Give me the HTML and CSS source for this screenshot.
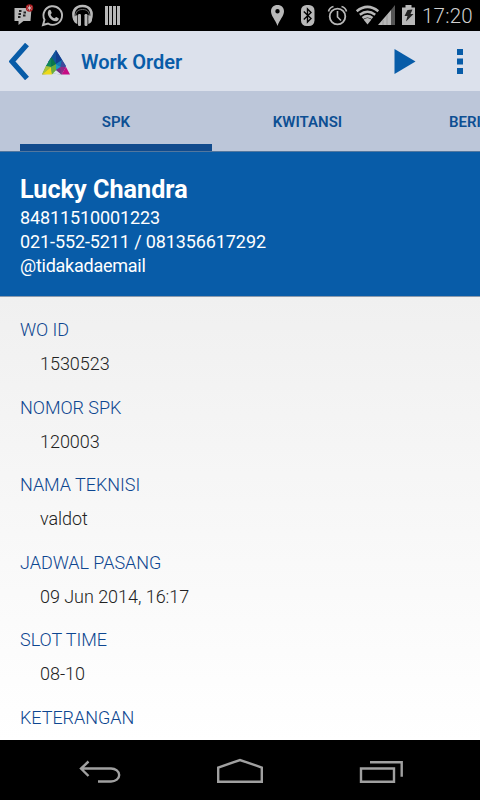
FILE: index.html
```html
<!DOCTYPE html>
<html lang="id">
<head>
    <meta charset="UTF-8">
    <meta name="viewport" content="width=device-width, initial-scale=1.0">
    <title>Work Order</title>
    <link rel="stylesheet" href="styles.css">
</head>
<body>

    <div class="status-bar">
        <svg width="130" height="31" viewBox="0 0 130 31" fill="#b8b8b8">
            <!-- messenger -->
            <path d="M14.500 8h17l-1 13h-7l-5 4v-4h-4z"/>
            <path d="M19 11h2.500M18.500 14h2.500M18 17h2.500M23.500 12.500h2.500M23 15.500h2.500" stroke="#222" stroke-width="1.800"/>
            <circle cx="29.500" cy="8" r="3.700" fill="#a61d20"/>
            <path d="M29.500 5.500v5M27.300 6.700l4.400 2.600M31.700 6.700l-4.400 2.600" stroke="#ddd" stroke-width=".7"/>
            <!-- whatsapp -->
            <path d="M43 25l1.500-5.200A9.300 9.300 0 1 1 48 23.500z" fill="none" stroke="#b8b8b8" stroke-width="1.900"/>
            <path d="M48.500 10.500c1-1 2-.8 2.400.2l.8 2c.2.700-1.200 1.500-1 2 .8 1.700 2 2.800 3.700 3.500.6.200 1.200-1.500 1.900-1.200l2.200 1.200c.8.400-.2 2.500-1.400 2.900-4.800 1.500-11.500-6-8.600-10.600z"/>
            <!-- headphones -->
            <path d="M74.500 20C71.500 12 75 6 82.500 6s11 6 8 14" fill="none" stroke="#b8b8b8" stroke-width="2.600"/>
            <path d="M76 20C74.500 12.500 77 9.500 82.500 9.500s8 3 6.500 10.500" fill="none" stroke="#888" stroke-width=".8"/>
            <rect x="78" y="14" width="3" height="12" rx="1.200"/>
            <rect x="84.500" y="14" width="3" height="12" rx="1.200"/>
            <path d="M77.300 15v9c-5-1-5-8 0-9zM88.300 15v9c5-1 5-8 0-9z"/>
            <!-- bars -->
            <path d="M105 6h3v19h-3zM109 6h3v19h-3zM113 6h3v19h-3zM117 6h3v19h-3z"/>
        </svg>
        <svg width="150" height="31" viewBox="268 0 150 31" fill="#b8b8b8">
            <!-- location -->
            <path fill-rule="evenodd" d="M277.500 5c4 0 6.500 2.700 6.500 6.300 0 4.700-4.500 8.700-6.500 14.700-2-6-6.500-10-6.500-14.700C271 7.700 273.500 5 277.500 5zm0 4a2.200 2.200 0 1 0 0 4.400 2.200 2.200 0 0 0 0-4.400z"/>
            <!-- bluetooth -->
            <rect x="301" y="5" width="13.500" height="21" rx="5.500"/>
            <path d="M303.800 11.500l7.200 7-3.500 3.500V9l3.500 3.500-7.200 7" fill="none" stroke="#000" stroke-width="1.400"/>
            <!-- alarm -->
            <circle cx="337.500" cy="16.500" r="7.800" fill="none" stroke="#b8b8b8" stroke-width="1.800"/>
            <path d="M337.500 11v6l3.500 3.500M328.500 11.500q1-4 5-5M346.500 11.500q-1-4-5-5" fill="none" stroke="#b8b8b8" stroke-width="1.600"/>
            <!-- wifi -->
            <path d="M367.500 24.500l-4-5q4-3 8 0z"/>
            <path d="M356.700 11.200q10.800-8.600 21.600 0M359.800 14.800q7.700-6 15.400 0M362.500 18q5-3.800 10 0" fill="none" stroke="#b8b8b8" stroke-width="2.500"/>
            <!-- signal -->
            <path d="M378 25l13-15v15z"/>
            <path d="M391 10l4-5v20h-4z" fill="#555"/>
            <path d="M383 20v5M387 15v10" stroke="#888" stroke-width=".6"/>
            <!-- battery -->
            <path d="M402 7.500h3.500V5h6v2.500h3.500V25h-13z"/>
            <path d="M407.500 10l5-.5-2 4.500h3l-7.500 7.500 1.500-5.500h-3z" fill="#222"/>
        </svg>
        <span class="clock">17:20</span>
    </div>

    <div class="action-bar">
        <svg class="back" width="20" height="37" viewBox="0 0 20 37">
            <path d="M18 1.500L3 18.500l15 17" fill="none" stroke="#085ca8" stroke-width="5.200"/>
        </svg>
        <svg class="logo" width="30" height="26" viewBox="0 0 30 26">
            <!-- base under the facets so no seams show -->
            <path d="M15 1L5 17h20z" fill="#11549b"/>
            <path d="M5 17l-4 8.500 10-1 9.500 1L25 17z" fill="#5a7a90"/>
            <path d="M11 24.500l4-3.500 5.500 4.500z" fill="#dce1ec"/>
            <path d="M15 1L7 13l8 2z" fill="#11549b"/>
            <path d="M15 1l6 10-6 4z" fill="#123d8f"/>
            <path d="M10.500 8L5 17l5 1z" fill="#118a55"/>
            <path d="M10.500 8L10 18l5-3z" fill="#087849"/>
            <path d="M15 15l6-4-1.500 7z" fill="#1478b5"/>
            <path d="M21 11l4 7-5.500 0z" fill="#41489b"/>
            <path d="M5 17l-4 8.500 9-7.500z" fill="#a8c536"/>
            <path d="M1 25.500l9-7.500 1 7.500z" fill="#edda19"/>
            <path d="M10 18l5-3 0 6-4 4.500z" fill="#69ae3c"/>
            <path d="M15 15l4.500 3-4.500 3z" fill="#1b9bc4"/>
            <path d="M15 21l4.500-3 1 7.500z" fill="#7b2a86"/>
            <path d="M19.500 18H25l-4.500 7.500z" fill="#922887"/>
            <path d="M25 18l4 7.500h-8.500z" fill="#c60b83"/>
        </svg>
        <h1>Work Order</h1>
        <svg class="play" width="22" height="25" viewBox="0 0 22 25" fill="#085ca8">
            <path d="M.5 0L21.500 12.500.5 25z"/>
        </svg>
        <svg class="more" width="6" height="25" viewBox="0 0 6 25" fill="#085ca8">
            <path d="M0 0h6v6H0zM0 9.500h6v6H0zM0 19h6v6H0z"/>
        </svg>
    </div>

    <div class="tabs">
        <div class="tab active">SPK</div>
        <div class="tab">KWITANSI</div>
        <div class="tab">BERITA ACARA</div>
    </div>

    <div class="customer">
        <h2>Lucky Chandra</h2>
        <p>84811510001223</p>
        <p>021-552-5211 / 081356617292</p>
        <p>@tidakadaemail</p>
    </div>

    <dl class="details">
        <dt>WO ID</dt>
        <dd>1530523</dd>
        <dt>NOMOR SPK</dt>
        <dd>120003</dd>
        <dt>NAMA TEKNISI</dt>
        <dd>valdot</dd>
        <dt>JADWAL PASANG</dt>
        <dd>09 Jun 2014, 16:17</dd>
        <dt>SLOT TIME</dt>
        <dd>08-10</dd>
        <dt>KETERANGAN</dt>
    </dl>

    <div class="nav-bar">
        <svg width="160" height="60" viewBox="0 0 160 60">
            <path d="M98 41.500h13a8.200 6.500 0 0 0 0-13H81M88.500 21.500l-7.500 7 7.500 7.500" />
        </svg>
        <svg width="160" height="60" viewBox="160 0 160 60">
            <path d="M218.200 41.700V27.500L240 20l21.800 7.500v14.200z"/>
        </svg>
        <svg width="160" height="60" viewBox="320 0 160 60">
            <path d="M361 28.500h33v13.200h-33zM370 22.300h31.700v14.500"/>
        </svg>
    </div>

</body>
</html>
```
FILE: styles.css
```css
* {
    box-sizing: border-box;
}
body {
    margin: 0;
    width: 480px;
    height: 800px;
    overflow: hidden;
    display: flex;
    flex-direction: column;
    font-family: Roboto, "Liberation Sans", sans-serif;
    background-color: #000;
}
h1, h2, p, dl, dd {
    margin: 0;
}
svg {
    display: block;
    flex: none;
}
.status-bar {
    height: 31px;
    display: flex;
    justify-content: space-between;
    background-color: #000;
}
.status-bar svg:nth-child(2) {
    margin-left: auto;
}
.clock {
    width: 62px;
    padding-left: 4px;
    font-size: 20.5px;
    font-weight: 300;
    line-height: 32px;
    letter-spacing: 0.2px;
    color: #d0d0d0;
}
.action-bar {
    height: 60px;
    display: flex;
    align-items: center;
    padding: 1px 17px 0 9px;
    background-color: #dce1ec;
}
.logo {
    margin: 1px 10px 0 12px;
}
h1 {
    font-size: 20px;
    font-weight: 600;
    color: #085ca8;
}
.play {
    margin-left: auto;
}
.more {
    margin-left: 41px;
}
.tabs {
    height: 61px;
    display: flex;
    padding-left: 20px;
    overflow: hidden;
    background-color: #bcc6d9;
    border-bottom: 1px solid #52779f;
}
.tab {
    flex: none;
    width: 191px;
    font-size: 15px;
    font-weight: 600;
    line-height: 62px;
    text-align: center;
    color: #0d4f93;
}
.tab:last-child {
    width: 195px;
}
.tab.active {
    width: 192px;
    border-bottom: 7px solid #114b8d;
}
.customer {
    height: 145px;
    padding: 21px 20px 0;
    background-color: #085ca8;
    border-bottom: 1px solid #8a9aad;
    color: #fff;
}
.customer h2 {
    font-size: 25.2px;
    font-weight: 700;
    line-height: 33px;
}
.customer p {
    font-size: 18px;
    line-height: 24px;
    letter-spacing: -0.11px;
}
.customer p:last-child {
    letter-spacing: -0.25px;
}
.details {
    flex: 1;
    padding: 21px 20px 0;
    overflow: hidden;
    background: linear-gradient(#f0f0f0, #fff);
    font-size: 18px;
    font-weight: 350;
    letter-spacing: -0.04px;
}
dt {
    height: 34px;
    line-height: 24px;
    color: #0d4690;
}
dd {
    height: 43.5px;
    padding-left: 20px;
    line-height: 24px;
    color: #222;
}
.nav-bar {
    height: 60px;
    display: flex;
    background-color: #000;
}
.nav-bar path {
    fill: none;
    stroke: #a0a0a0;
    stroke-width: 2.4;
}
```
